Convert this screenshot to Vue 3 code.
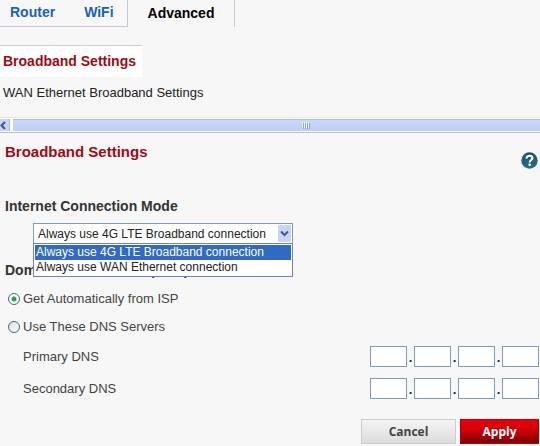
<template>
    <div class="page">
        <nav class="tabs">
            <div class="tabs-inactive">
                <a href="#router">Router</a>
                <a href="#wifi">WiFi</a>
            </div>
            <a href="#advanced" class="tab-active">Advanced</a>
        </nav>
        <nav class="submenu">
            <a href="#broadband" class="submenu-active">Broadband Settings</a>
            <a href="#wan">WAN Ethernet Broadband Settings</a>
        </nav>
        <div class="scrollbar">
            <button class="scroll-left" aria-label="Scroll left">
                <svg width="6" height="9" viewBox="0 0 6 9"><path d="M5 1 L1.5 4.5 L5 8" fill="none" stroke="#3f5583" stroke-width="2" /></svg>
            </button>
            <div class="scroll-thumb">
                <svg width="9" height="7" viewBox="0 0 9 7">
                    <path d="M1.5 1V7M3.5 1V7M5.5 1V7M7.5 1V7" stroke="#8aa9df" />
                    <path d="M.5 0V6M2.5 0V6M4.5 0V6M6.5 0V6" stroke="#eef4ff" />
                </svg>
            </div>
        </div>
        <form @submit.prevent>
            <div class="title">
                <h1>Broadband Settings</h1>
                <button type="button" class="help" aria-label="Help">
                    <svg width="17" height="17" viewBox="0 0 17 17">
                        <defs>
                            <linearGradient id="helpFill" x1="0" y1="0" x2="0" y2="1">
                                <stop offset="0" stop-color="#1d4f68" />
                                <stop offset="1" stop-color="#28728a" />
                            </linearGradient>
                        </defs>
                        <circle cx="8.5" cy="8.5" r="8.2" fill="url(#helpFill)" />
                        <path d="M5.6 6.5C5.6 4.5 6.8 3.7 8.6 3.7C10.4 3.7 11.5 4.7 11.5 6.1C11.5 8 8.7 8.1 8.7 10.4" fill="none" stroke="#fff" stroke-width="2.1" />
                        <circle cx="8.7" cy="12.8" r="1.3" fill="#fff" />
                    </svg>
                </button>
            </div>
            <label for="mode" class="section">Internet Connection Mode</label>
            <div class="dropdown">
                <select id="mode" v-model="mode" @mousedown.prevent="isOpen = !isOpen">
                    <option v-for="item in modes" :key="item" :value="item">{{ item }}</option>
                </select>
                <svg class="arrow" width="13" height="17" viewBox="0 0 13 17">
                    <rect width="13" height="17" rx="1" fill="#c5d5fc" />
                    <path d="M3 6.5 L6.5 10 L10 6.5" fill="none" stroke="#435a85" stroke-width="2" />
                </svg>
                <ul v-if="isOpen" class="options">
                    <li v-for="item in modes" :key="item" :class="{ selected: item === mode }" @click="selectMode(item)">{{ item }}</li>
                </ul>
            </div>
            <h2 class="section">Domain Name Server (DNS)</h2>
            <label v-for="item in dnsOptions" :key="item.value" class="radio-row">
                <input type="radio" name="dns" v-model="dnsType" :value="item.value">
                {{ item.label }}
            </label>
            <fieldset v-for="server in servers" :key="server.label" class="dns-row">
                <legend>{{ server.label }}</legend>
                <div class="octets">
                    <template v-for="(octet, index) in server.octets" :key="index">
                        <span v-if="index > 0" class="dot">.</span>
                        <input type="text" maxlength="3" v-model="server.octets[index]" :aria-label="server.label + ' ' + (index + 1)">
                    </template>
                </div>
            </fieldset>
            <div class="buttons">
                <button type="button" class="cancel">Cancel</button>
                <button type="submit" class="apply">Apply</button>
            </div>
        </form>
    </div>
</template>

<script setup>
import { ref } from 'vue'

const modes = ['Always use 4G LTE Broadband connection', 'Always use WAN Ethernet connection']
const mode = ref(modes[0])
const isOpen = ref(true)
const dnsOptions = [
    { label: 'Get Automatically from ISP', value: 'auto' },
    { label: 'Use These DNS Servers', value: 'manual' },
]
const dnsType = ref('auto')
const servers = ref([
    { label: 'Primary DNS', octets: ['', '', '', ''] },
    { label: 'Secondary DNS', octets: ['', '', '', ''] },
])

function selectMode(item) {
    mode.value = item
    isOpen.value = false
}
</script>

<style>
body {
    margin: 0;
    background: #f7f7f7;
}
</style>

<style scoped>
.page {
    font-family: "Liberation Sans", Arial, sans-serif;
    font-size: 13px;
    line-height: 16px;
    color: #444;
    overflow: hidden;
}

a {
    color: inherit;
    text-decoration: none;
}

.tabs {
    display: flex;
    font-size: 14px;
    font-weight: bold;
}

.tabs-inactive {
    display: flex;
    gap: 29px;
    padding: 4px 13px 6px 10px;
    border-right: 1px solid #c8c8d0;
    border-bottom: 1px solid #c8c8d0;
    color: #1763b8;
}

.tab-active {
    padding: 5px 20px 6px;
    border-right: 1px solid #c8c8c8;
    color: #000;
}

.submenu {
    display: flex;
    flex-direction: column;
    align-items: flex-start;
    margin-top: 18px;
    color: #222;
}

.submenu a {
    padding: 8px 3px;
}

.submenu .submenu-active {
    padding: 7px 6px 8px 3px;
    border-top: 1px solid #ccc;
    background: #fff;
    font-size: 14px;
    font-weight: bold;
    color: #a00a14;
}

.scrollbar {
    display: flex;
    gap: 3px;
    height: 12px;
    margin-top: 8px;
    padding: 1px 0;
    border-top: 1px solid #e4e4e2;
    border-bottom: 1px solid #b4c4dc;
    background: #fff;
}

.scroll-left {
    display: flex;
    align-items: center;
    width: 10px;
    padding: 0;
    border: none;
    border-right: 1px solid #a9bce6;
    background: #c5d5fc;
}

.scroll-thumb {
    flex: 1;
    display: flex;
    align-items: center;
    justify-content: center;
    padding-left: 60px;
    border-top: 1px solid #a9bde8;
    background: linear-gradient(#c9d8ff, #bccdf8);
}

.title {
    display: flex;
    justify-content: space-between;
    padding: 10px 2px 0 5px;
}

h1 {
    margin: 0;
    font-size: 15px;
    line-height: 18px;
    color: #a00a14;
}

.help {
    margin-top: 9px;
    padding: 0;
    border: none;
    background: none;
    height: 17px;
}

.help svg {
    display: block;
}

.section {
    display: block;
    margin: 0 5px;
    font-size: 14px;
    font-weight: bold;
    color: #333;
}

label.section {
    margin-top: 29px;
}

h2.section {
    margin-top: 18px;
}

.dropdown {
    position: relative;
    width: 260px;
    margin: 9px 0 0 33px;
    font-size: 12px;
    color: #222;
}

select {
    display: block;
    appearance: none;
    width: 100%;
    height: 21px;
    padding: 0 4px;
    border: 1px solid #7f9db9;
    border-radius: 0;
    background: #fff;
    font: inherit;
    color: inherit;
    outline: none;
}

.arrow {
    position: absolute;
    top: 2px;
    right: 2px;
    pointer-events: none;
}

.options {
    position: absolute;
    top: 20px;
    left: 0;
    right: 0;
    margin: 0;
    padding: 1px;
    border: 1px solid #6f86a8;
    background: #fff;
    list-style: none;
    line-height: 15px;
}

.options li {
    padding-left: 1px;
}

.options .selected {
    background: #316ac5;
    color: #fff;
}

.radio-row {
    display: flex;
    align-items: center;
    gap: 3px;
    margin: 12px 0 0 8px;
}

h2 + .radio-row {
    margin-top: 13px;
}

.radio-row input {
    appearance: none;
    width: 12px;
    height: 12px;
    margin: 0;
    border: 1px solid #42688d;
    border-radius: 50%;
    background: linear-gradient(135deg, #dcdcd8, #fff);
}

.radio-row input:checked {
    background: radial-gradient(circle, #2ba52b 2px, #fff 3px);
}

.dns-row {
    display: flex;
    margin: 11px 1px 0 23px;
    padding: 0;
    border: none;
}

.dns-row legend {
    float: left;
    padding: 3px 0 0;
}

.octets {
    flex: 1;
    display: flex;
    justify-content: flex-end;
}

.octets input {
    box-sizing: border-box;
    width: 37px;
    height: 21px;
    padding: 1px 4px;
    border: 1px solid #7f9db9;
    background: #fff;
}

.dot {
    width: 7px;
    padding-top: 4px;
    font-weight: bold;
    text-align: center;
    color: #222;
}

.buttons {
    display: flex;
    justify-content: flex-end;
    gap: 4px;
    margin: 20px 1px 0 0;
}

.buttons button {
    height: 25px;
    padding: 0;
    font: bold 12px "Open Sans", sans-serif;
}

.cancel {
    width: 95px;
    border: 1px solid #ccc;
    background: linear-gradient(#f4f4f4, #dcdcdc);
    color: #444;
}

.apply {
    width: 79px;
    border: 1px solid #b00;
    background: linear-gradient(#e8000a, #d0000a 45%, #7c0006);
    color: #fff;
}
</style>
